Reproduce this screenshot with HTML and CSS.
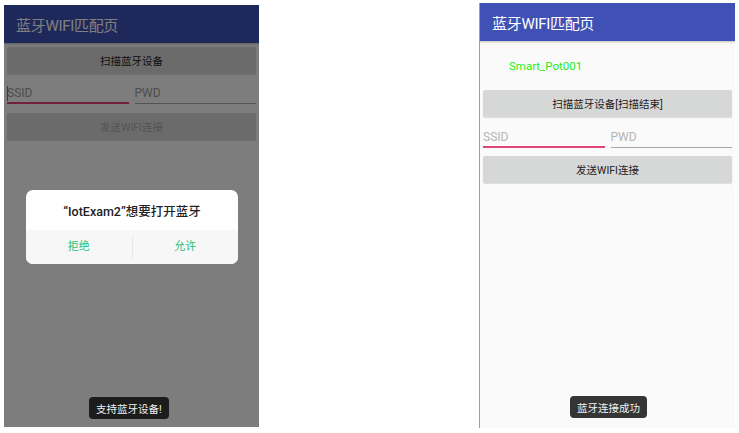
FILE: index.html
```html
<!DOCTYPE html>
<html lang="zh">
<head>
<meta charset="utf-8">
<link rel="stylesheet" href="styles.css">
</head>
<body>
<div class="page">
  <div class="phone phone-left">
    <div class="appbar"><span class="title">蓝牙WIFI匹配页</span></div>
    <div class="content">
      <div class="btn">扫描蓝牙设备</div>
      <div class="fields">
        <div class="field active"><span class="caret"></span>SSID</div>
        <div class="field">PWD</div>
      </div>
      <div class="btn disabled">发送WIFI连接</div>
    </div>
    <div class="dim"></div>
    <div class="dialog">
      <div class="dialog-title">“IotExam2”想要打开蓝牙</div>
      <div class="dialog-actions">
        <div class="action">拒绝</div>
        <div class="action">允许</div>
      </div>
    </div>
    <div class="toast toast-left">支持蓝牙设备!</div>
  </div>

  <div class="phone phone-right">
    <div class="appbar"><span class="title">蓝牙WIFI匹配页</span></div>
    <div class="content">
      <div class="device">Smart_Pot001</div>
      <div class="btn">扫描蓝牙设备[扫描结束]</div>
      <div class="fields">
        <div class="field active">SSID</div>
        <div class="field">PWD</div>
      </div>
      <div class="btn">发送WIFI连接</div>
    </div>
    <div class="toast toast-right">蓝牙连接成功</div>
  </div>
</div>
</body>
</html>
```
FILE: styles.css
```css
* { box-sizing: border-box; }
html, body { margin: 0; padding: 0; background: #ffffff; }
body {
  font-family: Roboto, "Noto Sans CJK SC", sans-serif;
  width: 739px;
  height: 433px;
  overflow: hidden;
}
.page {
  display: flex;
  justify-content: space-between;
  padding: 4px 4px 0 4px;
  height: 433px;
}
.phone {
  position: relative;
  width: 255px;
  height: 422px;
  background: #fafafa;
  overflow: hidden;
}
.phone-left { margin-top: 1px; }
.phone-right {
  width: 256px;
  margin-top: -1px;
  height: 425px;
  border-left: 1px solid #9e9e9e;
}
.appbar {
  height: 38px;
  background: #3f51b5;
  display: flex;
  align-items: center;
  padding-left: 12px;
  box-shadow: 0 1px 2px rgba(0,0,0,0.25);
}
.title {
  color: #ffffff;
  font-size: 15px;
  letter-spacing: -0.3px;
}
.content {
  padding: 4px 3px 0 3px;
  display: flex;
  flex-direction: column;
}
.btn {
  height: 27px;
  background: #d6d7d7;
  border-radius: 2px;
  display: flex;
  align-items: center;
  justify-content: center;
  font-size: 10.5px;
  color: #222222;
  box-shadow: 0 1px 1px rgba(0,0,0,0.12);
}
.btn.disabled { color: #aaaaaa; }
.fields {
  display: flex;
  gap: 6px;
  height: 37px;
  padding-top: 10px;
  margin-bottom: 2px;
}
.field {
  flex: 1;
  position: relative;
  font-size: 12px;
  color: #9b9b9b;
  border-bottom: 1px solid #a8a8a8;
  height: 21px;
  line-height: 20px;
}
.field.active { border-bottom: 2px solid #e0457a; }
.caret {
  position: absolute;
  left: 0;
  top: 3px;
  width: 1px;
  height: 15px;
  background: #e0457a;
}
.phone-left .content { padding-top: 4px; }
.phone-left .fields { height: 36px; padding-top: 9px; margin-bottom: 3px; }

.dim {
  position: absolute;
  inset: 0;
  background: rgba(0,0,0,0.5);
}
.dialog {
  position: absolute;
  left: 22px;
  top: 185px;
  width: 212px;
  height: 74px;
  background: #ffffff;
  border-radius: 7px;
  overflow: hidden;
  display: flex;
  flex-direction: column;
}
.dialog-title {
  height: 40px;
  display: flex;
  align-items: center;
  justify-content: center;
  font-size: 12.5px;
  font-weight: 500;
  color: #222222;
}
.dialog-actions {
  flex: 1;
  display: flex;
  background: #f7f7f7;
  align-items: center;
}
.action {
  flex: 1;
  text-align: center;
  font-size: 11px;
  color: #29c07a;
  line-height: 22px;
}
.action + .action { border-left: 1px solid #e6e6e6; }

.toast {
  position: absolute;
  height: 22px;
  padding: 0 7px;
  border-radius: 4px;
  font-size: 10.5px;
  color: #f2f2f2;
  display: flex;
  align-items: center;
}
.toast-left { left: 85px; bottom: 8px; background: #1c1c1c; }
.toast-right { left: 90px; bottom: 10px; background: #353535; }

.phone-right .content { padding-top: 0; }
.device {
  height: 49px;
  display: flex;
  align-items: center;
  padding-left: 26px;
  font-size: 11.5px;
  color: #1aee1a;
}
.phone-right .field { color: #b5b5b5; }
```
